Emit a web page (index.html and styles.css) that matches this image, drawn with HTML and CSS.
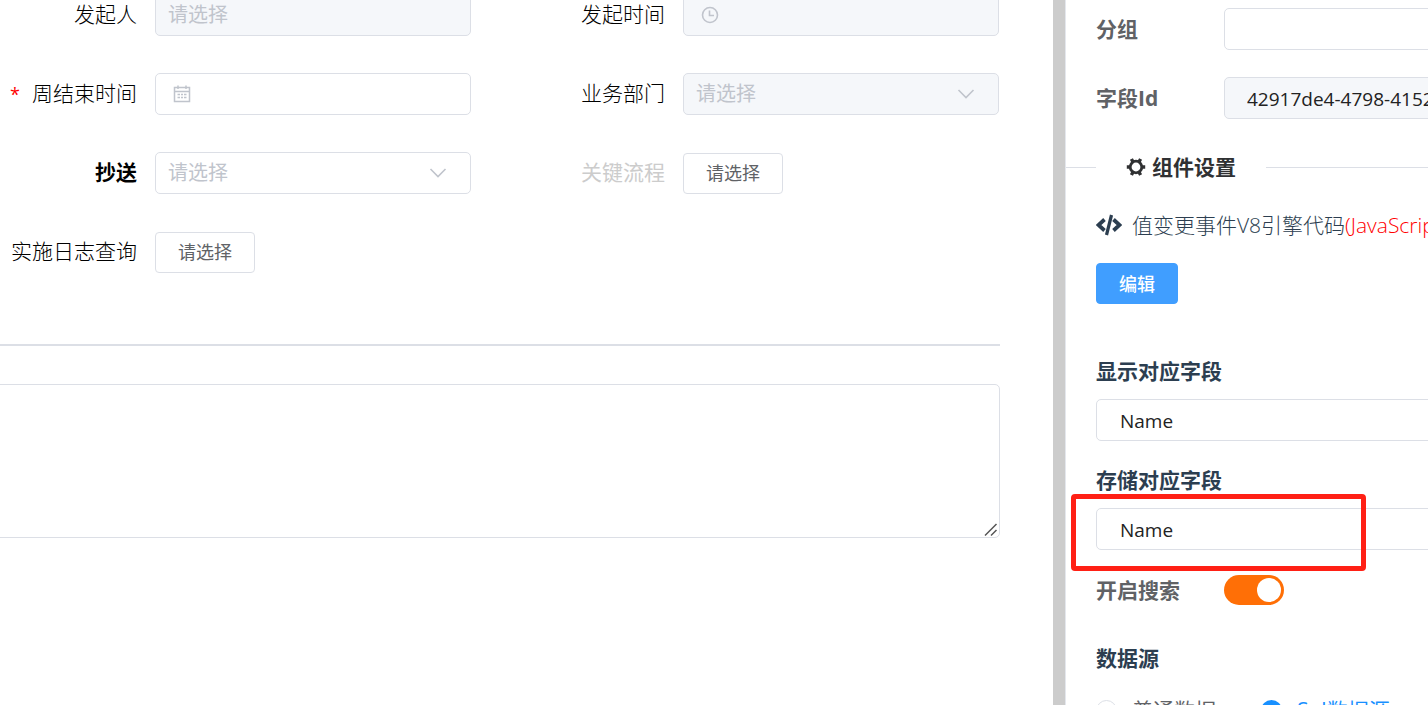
FILE: index.html
```
<!DOCTYPE html>
<html lang="zh-CN">
<head>
    <meta charset="UTF-8">
    <meta name="viewport" content="width=device-width, initial-scale=1.0">
    <title>表单设计</title>
    <link rel="stylesheet" href="styles.css">
</head>
<body>

<main class="designer">
    <form class="form-grid">
        <div class="form-item">
            <label class="form-label" for="starter">发起人</label>
            <div class="control">
                <input class="field" type="text" id="starter" placeholder="请选择" disabled>
            </div>
        </div>
        <div class="form-item">
            <label class="form-label" for="startTime">发起时间</label>
            <div class="control">
                <input class="field with-icon" type="text" id="startTime" disabled>
                <svg class="prefix-icon" viewBox="0 0 18 18" fill="none" stroke="currentColor" stroke-width="1.6">
                    <circle cx="9" cy="9" r="7.5"/>
                    <path d="M8.5 4.5V9.5H13"/>
                </svg>
            </div>
        </div>
        <div class="form-item">
            <label class="form-label required" for="weekEnd">周结束时间</label>
            <div class="control">
                <input class="field with-icon" type="text" id="weekEnd">
                <svg class="prefix-icon" viewBox="0 0 18 18" fill="none" stroke="currentColor">
                    <path d="M1.5 2.5H16.5V16.5H1.5ZM1.5 6.5H16.5" stroke-width="1.5"/>
                    <path d="M5 .5V4M13 .5V4" stroke-width="1.5"/>
                    <path d="M4.5 9.5H7M8 9.5H10M11 9.5H13.5M4.5 12.5H7M8 12.5H10M11 12.5H13.5" stroke-width="1.4"/>
                </svg>
            </div>
        </div>
        <div class="form-item">
            <label class="form-label" for="dept">业务部门</label>
            <div class="control">
                <select class="field" id="dept" disabled><option>请选择</option></select>
                <svg class="arrow" viewBox="0 0 18 10" fill="none" stroke="currentColor" stroke-width="1.6"><path d="M1.5 1L9 8.5L16.5 1"/></svg>
            </div>
        </div>
        <div class="form-item">
            <label class="form-label bold" for="copyTo">抄送</label>
            <div class="control">
                <select class="field" id="copyTo"><option>请选择</option></select>
                <svg class="arrow" viewBox="0 0 18 10" fill="none" stroke="currentColor" stroke-width="1.6"><path d="M1.5 1L9 8.5L16.5 1"/></svg>
            </div>
        </div>
        <div class="form-item">
            <label class="form-label muted" for="keyFlow">关键流程</label>
            <div class="control">
                <button class="btn" type="button" id="keyFlow">请选择</button>
            </div>
        </div>
        <div class="form-item">
            <label class="form-label" for="logQuery">实施日志查询</label>
            <div class="control">
                <button class="btn" type="button" id="logQuery">请选择</button>
            </div>
        </div>
    </form>
    <hr class="line">
    <div class="memo-box">
        <textarea class="memo" aria-label="备注"></textarea>
        <svg class="grip" viewBox="0 0 14 14" fill="none" stroke="#555" stroke-width="1.5"><path d="M1 12.5L12.5 1M7 12.5L12.5 7"/></svg>
    </div>
</main>

<div class="splitter"></div>

<aside class="settings">
    <div class="settings-body">
        <div class="row">
            <label class="row-label" for="group">分组</label>
            <input class="field" type="text" id="group">
        </div>
        <div class="row">
            <label class="row-label" for="fieldId">字段Id</label>
            <input class="field value" type="text" id="fieldId" value="42917de4-4798-4152-" disabled>
        </div>

        <h3 class="divider">
            <svg class="gear" viewBox="0 0 20 20" fill="none" stroke="currentColor">
                <circle cx="10" cy="10" r="5.8" stroke-width="2.8"/>
                <path d="M16 10H19.2M13 15.2L14.6 18M7 15.2L5.4 18M4 10H.8M7 4.8L5.4 2M13 4.8L14.6 2" stroke-width="3.4"/>
            </svg>
            组件设置
        </h3>

        <div class="code-title">
            <svg class="code-icon" viewBox="0 0 26 22" fill="none" stroke="currentColor" stroke-width="3.8">
                <path d="M8.5 5.5L2.5 11L8.5 16.5M17.5 5.5L23.5 11L17.5 16.5"/>
                <path d="M15.5 1L10.5 21" stroke-width="3.2"/>
            </svg>
            <span>值变更事件V8引擎代码<span class="red">(JavaScript)</span></span>
        </div>
        <button class="btn primary" type="button">编辑</button>

        <label class="block-label" for="showField">显示对应字段</label>
        <select class="field value" id="showField"><option>Name</option></select>

        <label class="block-label" for="saveField">存储对应字段</label>
        <div class="control marked">
            <select class="field value" id="saveField"><option>Name</option></select>
        </div>

        <div class="row switch-row">
            <label class="row-label" for="search">开启搜索</label>
            <input class="switch" type="checkbox" id="search" checked>
        </div>

        <h4 class="source-title">数据源</h4>
        <div class="radios">
            <label class="radio"><input type="radio" name="source">普通数据</label>
            <label class="radio"><input type="radio" name="source" checked>Sql数据源</label>
        </div>
    </div>
</aside>

</body>
</html>
```
FILE: styles.css
```
*, *::before, *::after {
    box-sizing: border-box;
}
body {
    margin: 0;
    display: flex;
    height: 100vh;
    overflow: hidden;
    background: white;
    font-family: "Open Sans", "Noto Sans CJK SC", sans-serif;
    font-size: 21px;
    line-height: 30px;
    color: #2c3e50;
}
input, select, button, textarea {
    font-family: inherit;
}

/* form area */
.designer {
    flex: 1;
    min-width: 0;
    padding-right: 53px;
    overflow: hidden;
}
.form-grid {
    display: grid;
    grid-template-columns: 1fr 1fr;
    gap: 37px 57px;
    margin-top: -6px;
    padding-right: 1px;
}
.form-item {
    display: flex;
    align-items: center;
    height: 42px;
}
.form-label {
    flex: 0 0 155px;
    padding: 0 18px 2px 0;
    text-align: right;
    font-weight: 300;
    color: black;
    white-space: nowrap;
}
.form-label.bold { font-weight: bold; }
.form-label.muted {
    font-weight: normal;
    color: #ccc;
}
.required::before {
    content: "*";
    margin-right: 12px;
    font-size: 18px;
    font-weight: normal;
    color: red;
}
.control {
    position: relative;
    flex: 1;
    display: flex;
    align-items: center;
    min-width: 0;
}
.field {
    flex: 1;
    display: block;
    width: 100%;
    min-width: 0;
    height: 42px;
    padding: 0 12px 1px;
    border: 1px solid #dcdfe6;
    border-radius: 5px;
    background: white;
    font-size: 20px;
    color: #c0c4cc;
    appearance: none;
}
.field::placeholder { color: #c0c4cc; }
.field:disabled {
    background: #f5f7fa;
    opacity: 1;
}
.field.with-icon { padding-left: 45px; }
.field.value {
    padding: 1px 22px 0 23px;
    font-size: 19px;
    color: #222;
}
.field.value:disabled { padding-left: 22px; }
.prefix-icon {
    position: absolute;
    left: 18px;
    width: 18px;
    height: 18px;
    color: #c0c4cc;
}
.arrow {
    position: absolute;
    right: 24px;
    width: 18px;
    height: 10px;
    color: #c0c4cc;
}
.btn {
    height: 41px;
    padding: 0 22px 2px;
    border: 1px solid #dcdfe6;
    border-radius: 4px;
    background: white;
    font-size: 18px;
    color: #606266;
    cursor: pointer;
}
.btn.primary {
    border-color: #409eff;
    background: #409eff;
    font-weight: 500;
    color: white;
}
.line {
    margin: 71px 0 38px;
    border: none;
    border-top: 2px solid #dcdfe6;
}
.memo-box {
    position: relative;
    margin-left: -10px;
}
.memo {
    display: block;
    width: 100%;
    height: 154px;
    border: 1px solid #dcdfe6;
    border-radius: 5px;
    resize: none;
}
.grip {
    position: absolute;
    right: 2px;
    bottom: 1px;
    width: 14px;
    height: 14px;
}

.splitter {
    flex: 0 0 12px;
    background: #ccc;
}

/* settings panel, its content runs past the right edge */
.settings {
    flex: 0 0 363px;
    overflow: hidden;
    border-left: 1px solid #e4e7ed;
}
.settings-body {
    width: 440px;
    padding: 8px 30px;
}
.row {
    display: flex;
    align-items: center;
    margin-bottom: 27px;
}
.row-label {
    flex: 0 0 128px;
    font-weight: bold;
    color: #606266;
}
.divider {
    display: flex;
    align-items: center;
    gap: 6px;
    margin: 33px -30px 28px;
    font-size: 21px;
    color: #303133;
}
.divider::before, .divider::after {
    content: "";
    height: 1px;
    background: #dcdfe6;
}
.divider::before {
    width: 30px;
    margin-right: 24px;
}
.divider::after {
    flex: 1;
    margin-left: 24px;
}
.gear {
    width: 20px;
    height: 20px;
}
.code-title {
    display: flex;
    align-items: center;
    gap: 10px;
    margin-bottom: 23px;
    font-weight: 300;
    white-space: nowrap;
}
.code-icon {
    width: 26px;
    height: 22px;
}
.red { color: red; }
.block-label {
    display: block;
    margin: 24px 0 13px;
    font-weight: bold;
}
.primary + .block-label { margin-top: 52px; }
/* highlighted setting */
.marked::after {
    content: "";
    position: absolute;
    left: -25px;
    top: -14px;
    width: 295px;
    height: 77px;
    border: 5px solid #ff2015;
    border-radius: 4px;
    pointer-events: none;
}
.switch-row {
    margin: 25px 0 38px;
}
.switch {
    position: relative;
    width: 60px;
    height: 30px;
    margin: 0;
    border-radius: 15px;
    background: #dcdfe6;
    appearance: none;
}
.switch::after {
    content: "";
    position: absolute;
    left: 3px;
    top: 3px;
    width: 24px;
    height: 24px;
    border-radius: 50%;
    background: white;
}
.switch:checked { background: #ff6f06; }
.switch:checked::after { left: 33px; }
.source-title {
    margin: 0 0 22px;
    font-size: 21px;
}
.radios {
    display: flex;
    gap: 45px;
}
.radio {
    display: flex;
    align-items: center;
    gap: 15px;
    color: #606266;
    white-space: nowrap;
}
.radio input {
    width: 21px;
    height: 21px;
    margin: 0;
    border: 1px solid #dcdfe6;
    border-radius: 50%;
    appearance: none;
}
.radio input:checked { border: 7px solid #1890ff; }
.radio:has(input:checked) { color: #1890ff; }
```
